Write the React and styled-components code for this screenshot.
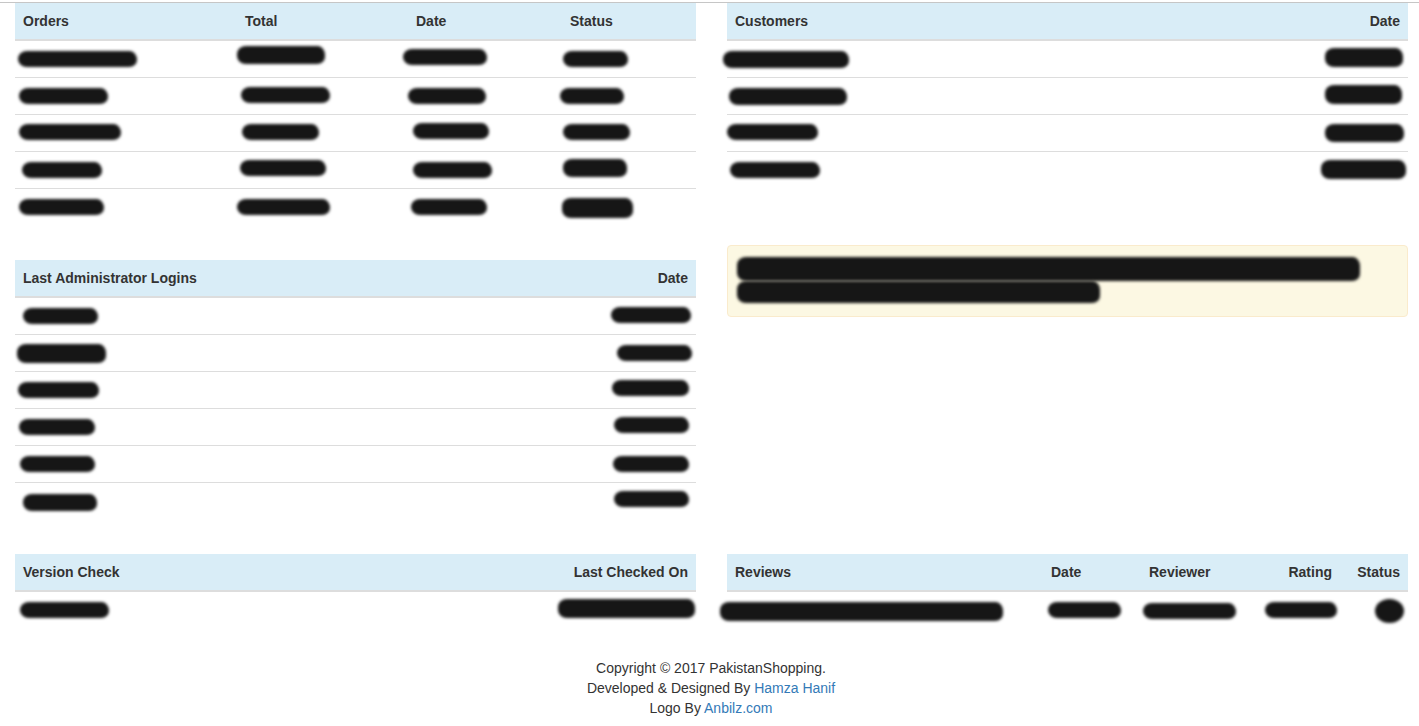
import React from "react";
import styled, { createGlobalStyle } from "styled-components";

const Global = createGlobalStyle`
  html, body { margin: 0; padding: 0; background: #fff; }
  body {
    font-family: "Liberation Sans", Arial, Helvetica, sans-serif;
    font-size: 14px;
    line-height: 20px;
    color: #333;
  }
  * { box-sizing: border-box; }
`;

const Page = styled.div`
  padding-top: 2px;
`;

const TopRule = styled.div`
  border-top: 1px solid #c6c6c6;
`;

const Row = styled.div`
  display: grid;
  grid-template-columns: 681px 681px;
  column-gap: 31px;
  padding-left: 15px;
  align-items: start;
  margin-top: ${(p) => p.$top || 0}px;
`;

const Column = styled.div`
  padding-top: ${(p) => p.$top || 0}px;
`;

const Table = styled.div`
  width: 100%;
  margin-bottom: 20px;
`;

const HeadRow = styled.div`
  display: grid;
  grid-template-columns: ${(p) => p.$cols};
  background: #d9edf7;
  border-bottom: 2px solid #ddd;
`;

const BodyRow = styled.div`
  display: grid;
  grid-template-columns: ${(p) => p.$cols};
  border-top: 1px solid #ddd;
  &:first-child { border-top: none; }
`;

const Th = styled.div`
  padding: 8px;
  font-weight: bold;
  line-height: 20px;
  white-space: nowrap;
  text-align: ${(p) => p.$align || "left"};
`;

const Td = styled.div`
  padding: 8px;
  min-width: 0;
  overflow: visible;
`;

const Scribble = styled.span`
  display: block;
  width: ${(p) => p.$w}px;
  height: ${(p) => p.$h}px;
  margin-left: ${(p) => p.$x}px;
  margin-top: ${(p) => (20 - p.$h) / 2 + p.$dy}px;
  margin-bottom: ${(p) => (20 - p.$h) / 2 - p.$dy}px;
  background: #161616;
  border-radius: ${(p) => (p.$round ? "50%" : "9px 7px 8px 9px / 8px 9px 7px 8px")};
  filter: blur(1.4px);
`;

const Alert = styled.div`
  padding: 15px;
  margin-bottom: 20px;
  background: #fcf8e3;
  border: 1px solid #faebcc;
  border-radius: 4px;
`;

const Footer = styled.footer`
  text-align: center;
  padding-top: 10px;
  padding-bottom: 8px;
  padding-left: 3px;
  color: #333;
`;

const FootLine = styled.div`
  line-height: 20px;
`;

const Link = styled.a`
  color: #337ab7;
  text-decoration: none;
`;

function S({ s }) {
  const [x, w, dy = 0, h = 16, round] = s;
  return <Scribble $x={x} $w={w} $dy={dy} $h={h} $round={round} />;
}

function DataTable({ cols, heads, rows }) {
  return (
    <Table>
      <HeadRow $cols={cols}>
        {heads.map(([label, align], i) => (
          <Th key={i} $align={align}>
            {label}
          </Th>
        ))}
      </HeadRow>
      <div>
        {rows.map((r, i) => (
          <BodyRow key={i} $cols={cols}>
            {r.map((s, j) => (
              <Td key={j}>
                <S s={s} />
              </Td>
            ))}
          </BodyRow>
        ))}
      </div>
    </Table>
  );
}

const orders = [
  [[-5, 119, 0], [-8, 88, -4, 18], [-13, 84, -2], [-7, 65, 0]],
  [[-4, 89, 0], [-4, 89, -1], [-8, 78, 0], [-10, 64, 0]],
  [[-4, 102, -1], [-3, 77, -1], [-3, 76, -2], [-7, 67, -1]],
  [[-1, 80, 0], [-5, 86, -2], [-3, 79, 0], [-7, 64, -2, 18]],
  [[-4, 85, 0], [-8, 93, 0], [-5, 76, 0], [-8, 71, 1, 20]],
];

const customers = [
  [[-12, 126, 0, 17], [29, 78, -2, 19]],
  [[-6, 118, 0, 17], [29, 77, -2, 19]],
  [[-8, 91, -1], [29, 79, 0, 18]],
  [[-5, 90, 0], [25, 85, -1, 19]],
];

const admins = [
  [[0, 75, 0], [27, 80, -1]],
  [[-6, 89, 0, 19], [33, 75, 0]],
  [[-5, 81, 0], [28, 77, -2]],
  [[-4, 76, 0], [30, 75, -2]],
  [[-3, 75, 0], [29, 76, 0]],
  [[0, 74, 1, 17], [30, 75, -2]],
];

const version = [[[-3, 89, 0], [14, 137, -2, 19]]];

const reviews = [
  [[-15, 283, 1, 19], [-3, 73, 0], [-6, 93, 1], [0, 72, 0], [27, 29, 1, 24, true]],
];

export default function App() {
  return (
    <>
      <Global />
      <Page>
        <TopRule />
        <Row>
          <Column>
            <DataTable
              cols="222px 171px 154px 134px"
              heads={[["Orders"], ["Total"], ["Date"], ["Status"]]}
              rows={orders}
            />
          </Column>
          <Column>
            <DataTable
              cols="1fr 120px"
              heads={[["Customers"], ["Date", "right"]]}
              rows={customers}
            />
          </Column>
        </Row>
        <Row>
          <Column $top={15}>
            <DataTable
              cols="1fr 120px"
              heads={[["Last Administrator Logins"], ["Date", "right"]]}
              rows={admins}
            />
          </Column>
          <Column>
            <Alert>
              <S s={[-6, 623, -2, 24]} />
              <S s={[-6, 363, 1, 22]} />
            </Alert>
          </Column>
        </Row>
        <Row $top={15}>
          <Column>
            <DataTable
              cols="1fr 160px"
              heads={[["Version Check"], ["Last Checked On", "right"]]}
              rows={version}
            />
          </Column>
          <Column>
            <DataTable
              cols="316px 98px 116px 83px 68px"
              heads={[
                ["Reviews"],
                ["Date"],
                ["Reviewer"],
                ["Rating", "right"],
                ["Status", "right"],
              ]}
              rows={reviews}
            />
          </Column>
        </Row>
        <Footer>
          <FootLine>Copyright © 2017 PakistanShopping.</FootLine>
          <FootLine>
            Developed &amp; Designed By <Link href="#">Hamza Hanif</Link>
          </FootLine>
          <FootLine>
            Logo By <Link href="#">Anbilz.com</Link>
          </FootLine>
        </Footer>
      </Page>
    </>
  );
}
